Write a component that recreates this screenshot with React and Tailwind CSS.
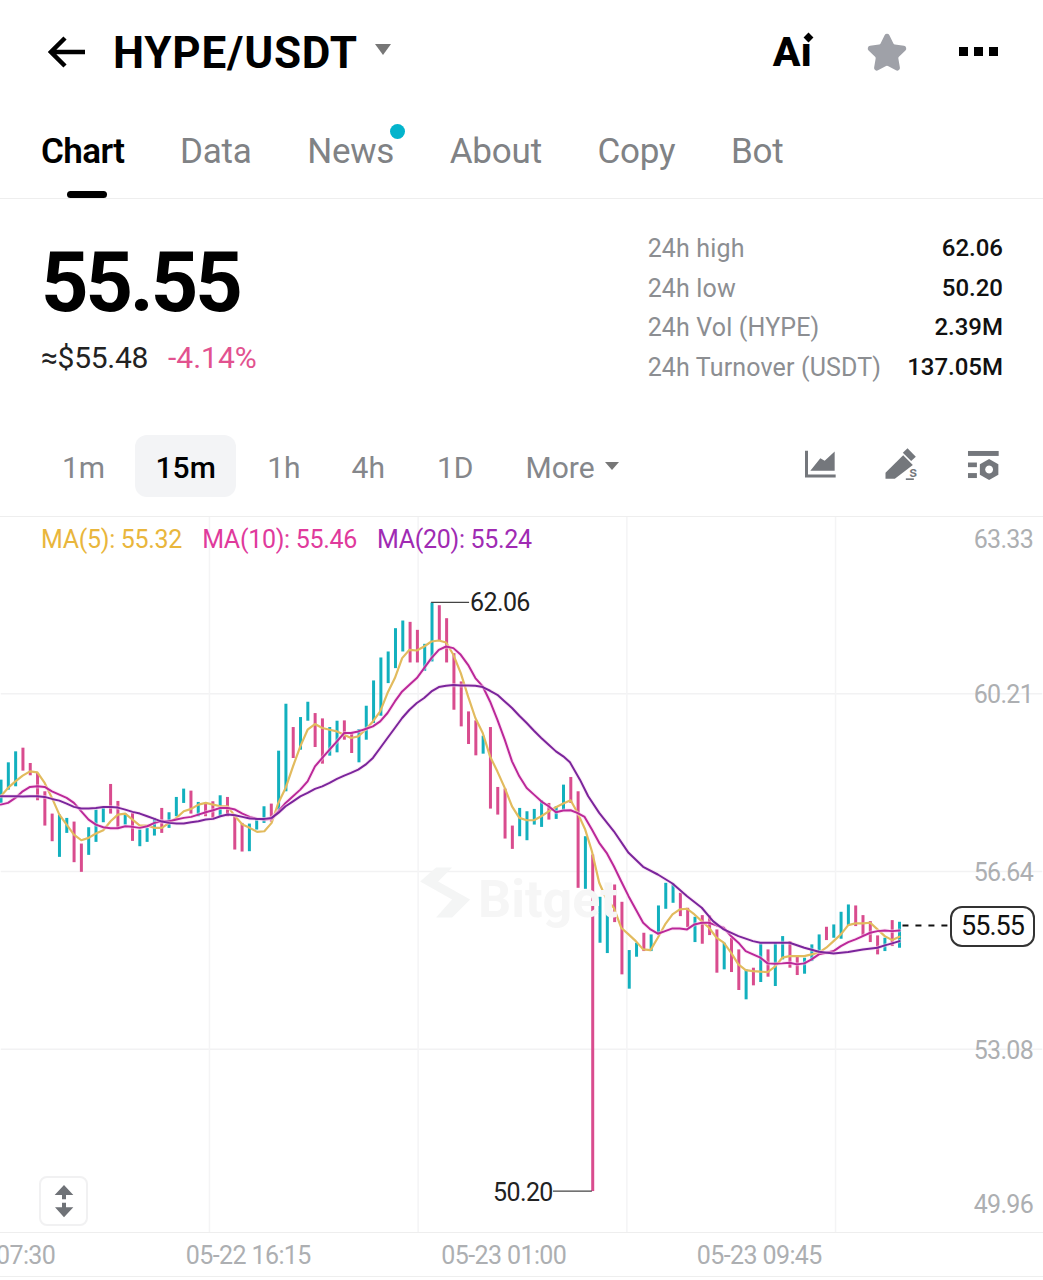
import { Star } from "lucide-react";

// candle data: [color, top, bottom] read off the chart in three 3x sections
const z2 = "g570-640 g518-600 g485-590 r474-543 r520-557 r550-632 r605-708 r672-755 g675-802 g685-730 r696-818 r762-847 g713-796 g660-757 g655-698 r583-672 r634-715 g672-705 r670-754 g720-770 g715-757 g685-738 r655-730 g668-715 g622-680 g597-640 r603-672 g637-680 r640-680 r635-685 g617-680 r622-680 r675-780 r700-786 g702-785 g685-720 g650-700 r642-696 g483-660 g342-605 r412-505 g382-480 g336-393 r370-472 r386-522 g412-498 g393-488 r392-450";
const z3 = "r430-490 g418-518 g348-450 g272-400 g203-378 g185-280 g115-235 g92-185 r96-218 r120-218 g162-243 g38-215 r46-152 r85-218 r190-360 r275-410 r365-463 r392-497 g438-492 r412-657 r592-675 r597-747 r708-778 g655-740 g665-752 g658-705 g632-712 r640-690 g650-688 g585-660 r562-640";
const z4 = "r35-325 g170-328 r225-1236 g352-490 g363-521 r315-428 r367-585 g512-628 g490-532 r460-515 g465-515 g378-465 g310-388 g312-370 r340-410 r385-443 g412-488 r407-493 r408-467 r450-580 g490-570 r475-578 r510-632 g570-660 r565-618 g492-608 r510-592 g490-620 g470-540 r485-565 r530-587 g535-583 g495-545 g465-520 r442-482 g435-475 g397-478 g375-438 r378-440 r407-470 r425-488 r468-525 g475-515 r422-500 g427-505";

const parse = (s, base) =>
  s.split(" ").map((b) => {
    const [a, c] = b.slice(1).split("-").map(Number);
    return { up: b[0] === "g", top: base + a / 3, bottom: base + c / 3 };
  });
const candles = [...parse(z2, 590), ...parse(z3, 590), ...parse(z4, 780)];

const toPx = (pts, ox, oy) => pts.map(([x, y]) => `${(ox + x / 3).toFixed(1)},${(oy + y / 3).toFixed(1)}`).join(" ");

const ma5 = [
  toPx([[0,620],[22,595],[44,575],[66,558],[88,545],[110,548],[132,580],[154,625],[176,675],[198,705],[220,735],[242,752],[264,745],[286,732],[308,722],[330,695],[352,675],[374,672],[396,690],[418,708],[440,708],[462,715],[484,715],[506,700],[528,685],[550,665],[572,658],[594,645],[616,640],[638,645],[660,650],[682,650],[704,680],[726,705],[748,715],[770,727],[792,725],[814,700],[834,640],[856,595],[878,530],[900,470],[922,420],[944,403],[966,415],[988,420],[1010,425],[1032,435]], 0, 590),
  toPx([[2,445],[24,440],[46,420],[68,395],[90,365],[112,310],[134,265],[156,205],[178,180],[200,182],[222,170],[244,155],[266,152],[288,158],[310,195],[332,250],[354,320],[376,385],[398,430],[420,500],[442,545],[464,595],[486,650],[508,685],[530,692],[552,692],[574,680],[596,665],[618,653],[640,642],[662,632],[684,672],[706,720]], 350, 590),
  toPx([[66,215],[88,310],[110,360],[132,385],[154,445],[176,465],[198,485],[220,510],[242,512],[264,475],[286,435],[308,405],[330,390],[352,388],[374,405],[396,425],[418,445],[440,475],[462,490],[484,520],[506,555],[528,572],[550,575],[572,577],[594,578],[616,562],[638,535],[660,530],[682,530],[704,530],[726,525],[748,520],[770,505],[792,485],[814,465],[836,437],[858,432],[880,432],[902,430],[924,450],[946,470],[968,482],[990,472]], 570, 780),
].join(" ");

const ma10 = [
  toPx([[0,645],[22,640],[44,625],[66,605],[88,592],[110,590],[132,592],[154,605],[176,615],[198,625],[220,640],[242,665],[264,690],[286,705],[308,713],[330,716],[352,716],[374,710],[396,712],[418,715],[440,710],[462,700],[484,695],[506,695],[528,690],[550,685],[572,682],[594,675],[616,668],[638,662],[660,655],[682,655],[704,660],[726,672],[748,682],[770,688],[792,690],[814,688],[834,665],[856,640],[878,620],[900,600],[922,575],[944,530],[966,505],[988,480],[1010,455],[1032,430]], 0, 590),
  toPx([[2,430],[24,425],[46,418],[68,410],[90,395],[112,370],[134,335],[156,305],[178,285],[200,265],[222,235],[244,205],[266,180],[288,170],[310,175],[332,195],[354,225],[376,265],[398,290],[420,335],[442,390],[464,450],[486,515],[508,560],[530,595],[552,615],[574,635],[596,650],[618,668],[640,663],[662,662]], 350, 590),
  toPx([[22,100],[44,112],[66,150],[88,190],[110,220],[132,260],[154,305],[176,350],[198,390],[220,430],[242,450],[264,463],[286,455],[308,447],[330,447],[352,450],[374,435],[396,430],[418,430],[440,438],[462,445],[484,470],[506,490],[528,515],[550,525],[572,535],[594,552],[616,553],[638,552],[660,550],[682,555],[704,552],[726,540],[748,525],[770,520],[792,515],[814,500],[836,488],[858,480],[880,470],[902,460],[924,455],[946,453],[968,455],[990,453]], 570, 780),
].join(" ");

const ma20 = [
  toPx([[0,620],[22,620],[44,620],[66,621],[88,620],[110,620],[132,622],[154,628],[176,633],[198,642],[220,652],[242,657],[264,657],[286,655],[308,652],[330,652],[352,654],[374,660],[396,667],[418,672],[440,680],[462,688],[484,696],[506,700],[528,702],[550,702],[572,698],[594,695],[616,690],[638,688],[660,680],[682,675],[704,677],[726,682],[748,687],[770,688],[792,688],[814,685],[834,670],[856,650],[878,635],[900,620],[922,610],[944,598],[966,590],[988,580],[1010,568],[1032,558]], 0, 590),
  toPx([[2,550],[24,540],[46,525],[68,505],[90,475],[112,445],[134,415],[156,385],[178,360],[200,340],[222,325],[244,305],[266,292],[288,288],[310,286],[332,287],[354,287],[376,288],[398,292],[420,303],[442,315],[464,335],[486,355],[508,378],[530,400],[552,423],[574,445],[596,465],[618,485],[640,500]], 350, 590),
  toPx([[0,-52],[30,0],[55,50],[88,100],[132,155],[176,220],[220,262],[264,285],[308,312],[352,350],[396,385],[430,425],[462,450],[506,470],[550,485],[572,490],[616,490],[660,490],[704,505],[748,517],[792,522],[836,518],[880,510],[924,505],[946,498],[968,492],[990,485]], 570, 780),
].join(" ");

const tabs = ["Chart", "Data", "News", "About", "Copy", "Bot"];
const stats = [
  ["24h high", "62.06"],
  ["24h low", "50.20"],
  ["24h Vol (HYPE)", "2.39M"],
  ["24h Turnover (USDT)", "137.05M"],
];
const priceTicks = [
  ["63.33", "top-[8px]"],
  ["60.21", "top-[163px]"],
  ["56.64", "top-[341px]"],
  ["53.08", "top-[519px]"],
  ["49.96", "top-[673px]"],
];

function ChartSvg() {
  return (
    <svg viewBox="0 517 1043 716" className="absolute inset-0 h-full w-full">
      {[694, 872, 1050].map((y) => (
        <line key={y} x1="0" x2="1043" y1={y} y2={y} stroke="#f2f2f3" strokeWidth="1.5" />
      ))}
      {[209, 418, 627, 836].map((x) => (
        <line key={x} x1={x} x2={x} y1="517" y2="1233" stroke="#f4f4f5" strokeWidth="1.5" />
      ))}
      {/* watermark logo */}
      <path d="M436 868 L420 882 L452 900 L436 918 L452 918 L470 900 L438 882 L452 868 Z" fill="#f4f5f5" />
      {candles.map((c, i) => (
        <rect
          key={i}
          x={0.3 + i * 7.315 - 1.5}
          y={c.top}
          width="3"
          height={c.bottom - c.top}
          fill={c.up ? "#12b0be" : "#d94c8e"}
        />
      ))}
      <g fill="none" strokeLinejoin="round" strokeLinecap="round">
        <polyline points={ma5} stroke="#e2bb5e" strokeWidth="2.2" />
        <polyline points={ma10} stroke="#fbd5f0" strokeWidth="4" opacity="0.5" />
        <polyline points={ma10} stroke="#bb2899" strokeWidth="2" />
        <polyline points={ma20} stroke="#fbd5f0" strokeWidth="4" opacity="0.5" />
        <polyline points={ma20} stroke="#7a259c" strokeWidth="2" />
      </g>
      {/* high / low / last price leaders */}
      <path d="M431 602.5 H469 M553 1192 H592" stroke="#444" strokeWidth="1.2" fill="none" />
      <line x1="903" x2="948" y1="926" y2="926" stroke="#111" strokeWidth="2" strokeDasharray="6 7" />
    </svg>
  );
}

export default function App() {
  return (
    <div className="h-[1280px] w-[1043px] overflow-hidden bg-white font-['Roboto',sans-serif]">
      {/* Header */}
      <header className="flex h-[105px] items-center pl-[48px] pr-[45px]">
        <svg viewBox="0 0 38 32" className="mb-[2px] h-[32px] w-[38px]" fill="none" stroke="#000" strokeWidth="4.5">
          <path d="M37 16 H4 M17 2 L3 16 L17 30" />
        </svg>
        <h1 className="ml-[27px] text-[44px] font-bold leading-none tracking-[0.8px] text-black">HYPE/USDT</h1>
        <span className="ml-[17px] mb-[6px] h-0 w-0 border-x-[8px] border-t-[11px] border-x-transparent border-t-[#777]" />
        <div className="relative ml-auto text-[41px] font-extrabold leading-none text-black">
          Aı
          <span className="absolute right-[0px] top-[2px] h-[7px] w-[7px] rotate-45 bg-black" />
        </div>
        <Star className="ml-[54px] h-[42px] w-[42px] fill-[#9fa1a8] text-[#9fa1a8]" strokeWidth={2} />
        <div className="mb-[2px] ml-[51px] flex gap-[6px]">
          <span className="h-[9px] w-[9px] bg-black" />
          <span className="h-[9px] w-[9px] bg-black" />
          <span className="h-[9px] w-[9px] bg-black" />
        </div>
      </header>

      {/* Tabs */}
      <nav className="flex h-[94px] gap-[55.5px] border-b border-[#eeeeee] pl-[41px] pt-[27px]">
        {tabs.map((t, i) => (
          <div key={t} className="relative h-fit">
            <span className={`text-[35px] leading-[40px] ${i === 0 ? "font-semibold tracking-[-0.6px] text-black" : "tracking-[-0.2px] text-[#808285]"}`}>{t}</span>
            {t === "News" && <span className="absolute right-[-11px] top-[-8px] h-[15px] w-[15px] rounded-full bg-[#03b4cc]" />}
            {i === 0 && <span className="absolute left-[26px] top-[59px] h-[7px] w-[40px] rounded-sm bg-black" />}
          </div>
        ))}
      </nav>

      {/* Price and 24h stats */}
      <section className="flex h-[236px] justify-between pl-[41px] pr-[40px]">
        <div className="pt-[43px]">
          <div className="text-[83px] font-bold leading-[82px] tracking-[-3.2px] text-black">55.55</div>
          <div className="mt-[16px] flex items-center text-[30px] leading-[36px]">
            <span className="tracking-[-0.3px] text-[#222]">≈$55.48</span>
            <span className="ml-[20px] text-[#e2528f]">-4.14%</span>
          </div>
        </div>
        <div className="grid h-fit grid-cols-[auto_auto] gap-x-[26px] pt-[30px] text-[25px] leading-[39.6px]">
          {stats.map(([label, value]) => [
            <span key={label} className="tracking-[0.15px] text-[#8c8e92]">{label}</span>,
            <span key={value} className="text-right text-[24px] font-medium text-[#111]">{value}</span>,
          ])}
        </div>
      </section>

      {/* Timeframes */}
      <div className="flex h-[82px] items-start border-b border-[#eeeeee] pl-[62px] text-[30px] leading-[66px] text-[#85878b]">
        <span>1m</span>
        <span className="ml-[30px] h-[62px] w-[101px] rounded-xl bg-[#f3f4f6] text-center font-medium text-black">15m</span>
        <span className="ml-[31px]">1h</span>
        <span className="ml-[51px]">4h</span>
        <span className="ml-[52px]">1D</span>
        <span className="ml-[52px]">More</span>
        <span className="ml-[10px] mt-[27px] h-0 w-0 border-x-[7px] border-t-[8px] border-x-transparent border-t-[#777]" />
        <svg viewBox="70 60 105 95" className="ml-[184px] mt-[13px] h-[32px] w-[35px]" fill="#74777c">
          <path d="M76 68 H85 V139 H168 V148 H76 Z" />
          <path d="M92 128 L122 90 L135 98 L165 70 V128 Z" />
        </svg>
        <svg viewBox="310 50 110 105" className="ml-[45px] mt-[11px] h-[35px] w-[37px]" fill="#74777c">
          <path d="M317 130 L370 78 L399 107 L345 148 H317 Z" />
          <path d="M369 70 L383 57 L408 82 L394 95 Z" />
          <text x="388" y="143" fontSize="46" fontWeight="500" fontFamily="Roboto">s</text>
          <rect x="378" y="147" width="24" height="5" />
        </svg>
        <svg viewBox="560 55 100 95" className="ml-[47px] mt-[14px] h-[32px] w-[33px]" fill="#74777c">
          <rect x="563" y="60" width="93" height="15" />
          <rect x="563" y="95" width="27" height="14" />
          <rect x="563" y="127" width="27" height="15" />
          <path fillRule="evenodd" d="M627 84 L655 100 V132 L627 148 L599 132 V100 Z M627 104 a12 12 0 1 0 0.01 0 Z" />
        </svg>
      </div>

      {/* Chart */}
      <div className="relative h-[716px] overflow-hidden border-b border-[#eeeeee]">
        <ChartSvg />
        <span className="absolute left-[478px] top-[357px] text-[52px] font-bold leading-none text-[#f6f6f6]">Bitget</span>
        <div className="absolute left-[41px] top-[9px] flex gap-[20px] text-[25px] leading-[28px] tracking-[-0.3px]">
          <span className="text-[#e9b63c]">MA(5): 55.32</span>
          <span className="text-[#e03a9c]">MA(10): 55.46</span>
          <span className="text-[#a02bb3]">MA(20): 55.24</span>
        </div>
        {priceTicks.map(([v, pos]) => (
          <span key={v} className={`absolute right-[10px] text-[25px] leading-[30px] tracking-[-0.7px] text-[#adafb2] ${pos}`}>{v}</span>
        ))}
        <span className="absolute left-[470px] top-[71px] text-[25px] leading-[30px] tracking-[-0.6px] text-[#222]">62.06</span>
        <span className="absolute left-[493px] top-[661px] text-[25px] leading-[30px] tracking-[-0.6px] text-[#222]">50.20</span>
        <span className="absolute left-[950px] top-[389px] flex h-[41px] w-[85px] items-center justify-center rounded-xl border-2 border-[#333] bg-white text-[27px] tracking-[-1px] text-[#111]">55.55</span>
        <button className="absolute left-[39px] top-[659px] flex h-[50px] w-[49px] items-center justify-center rounded-lg border-2 border-[#f1f1f2] bg-white">
          <svg viewBox="160 72 60 102" className="h-[34px] w-[20px]" fill="#6f7277">
            <path d="M190 75 L218 105 H196 V118 H184 V105 H162 Z" />
            <path d="M184 128 H196 V142 H218 L190 172 L163 142 H184 Z" />
          </svg>
        </button>
      </div>

      {/* Time axis */}
      <div className="flex h-[44px] items-center overflow-hidden border-b border-[#eeeeee] pt-[2px] text-[25px] leading-none tracking-[-0.6px] text-[#adafb2]">
        <div className="ml-[-135px] flex">
          {["05-22 07:30", "05-22 16:15", "05-23 01:00", "05-23 09:45"].map((t) => (
            <span key={t} className="w-[255.5px] shrink-0 text-center">{t}</span>
          ))}
        </div>
      </div>
    </div>
  );
}
